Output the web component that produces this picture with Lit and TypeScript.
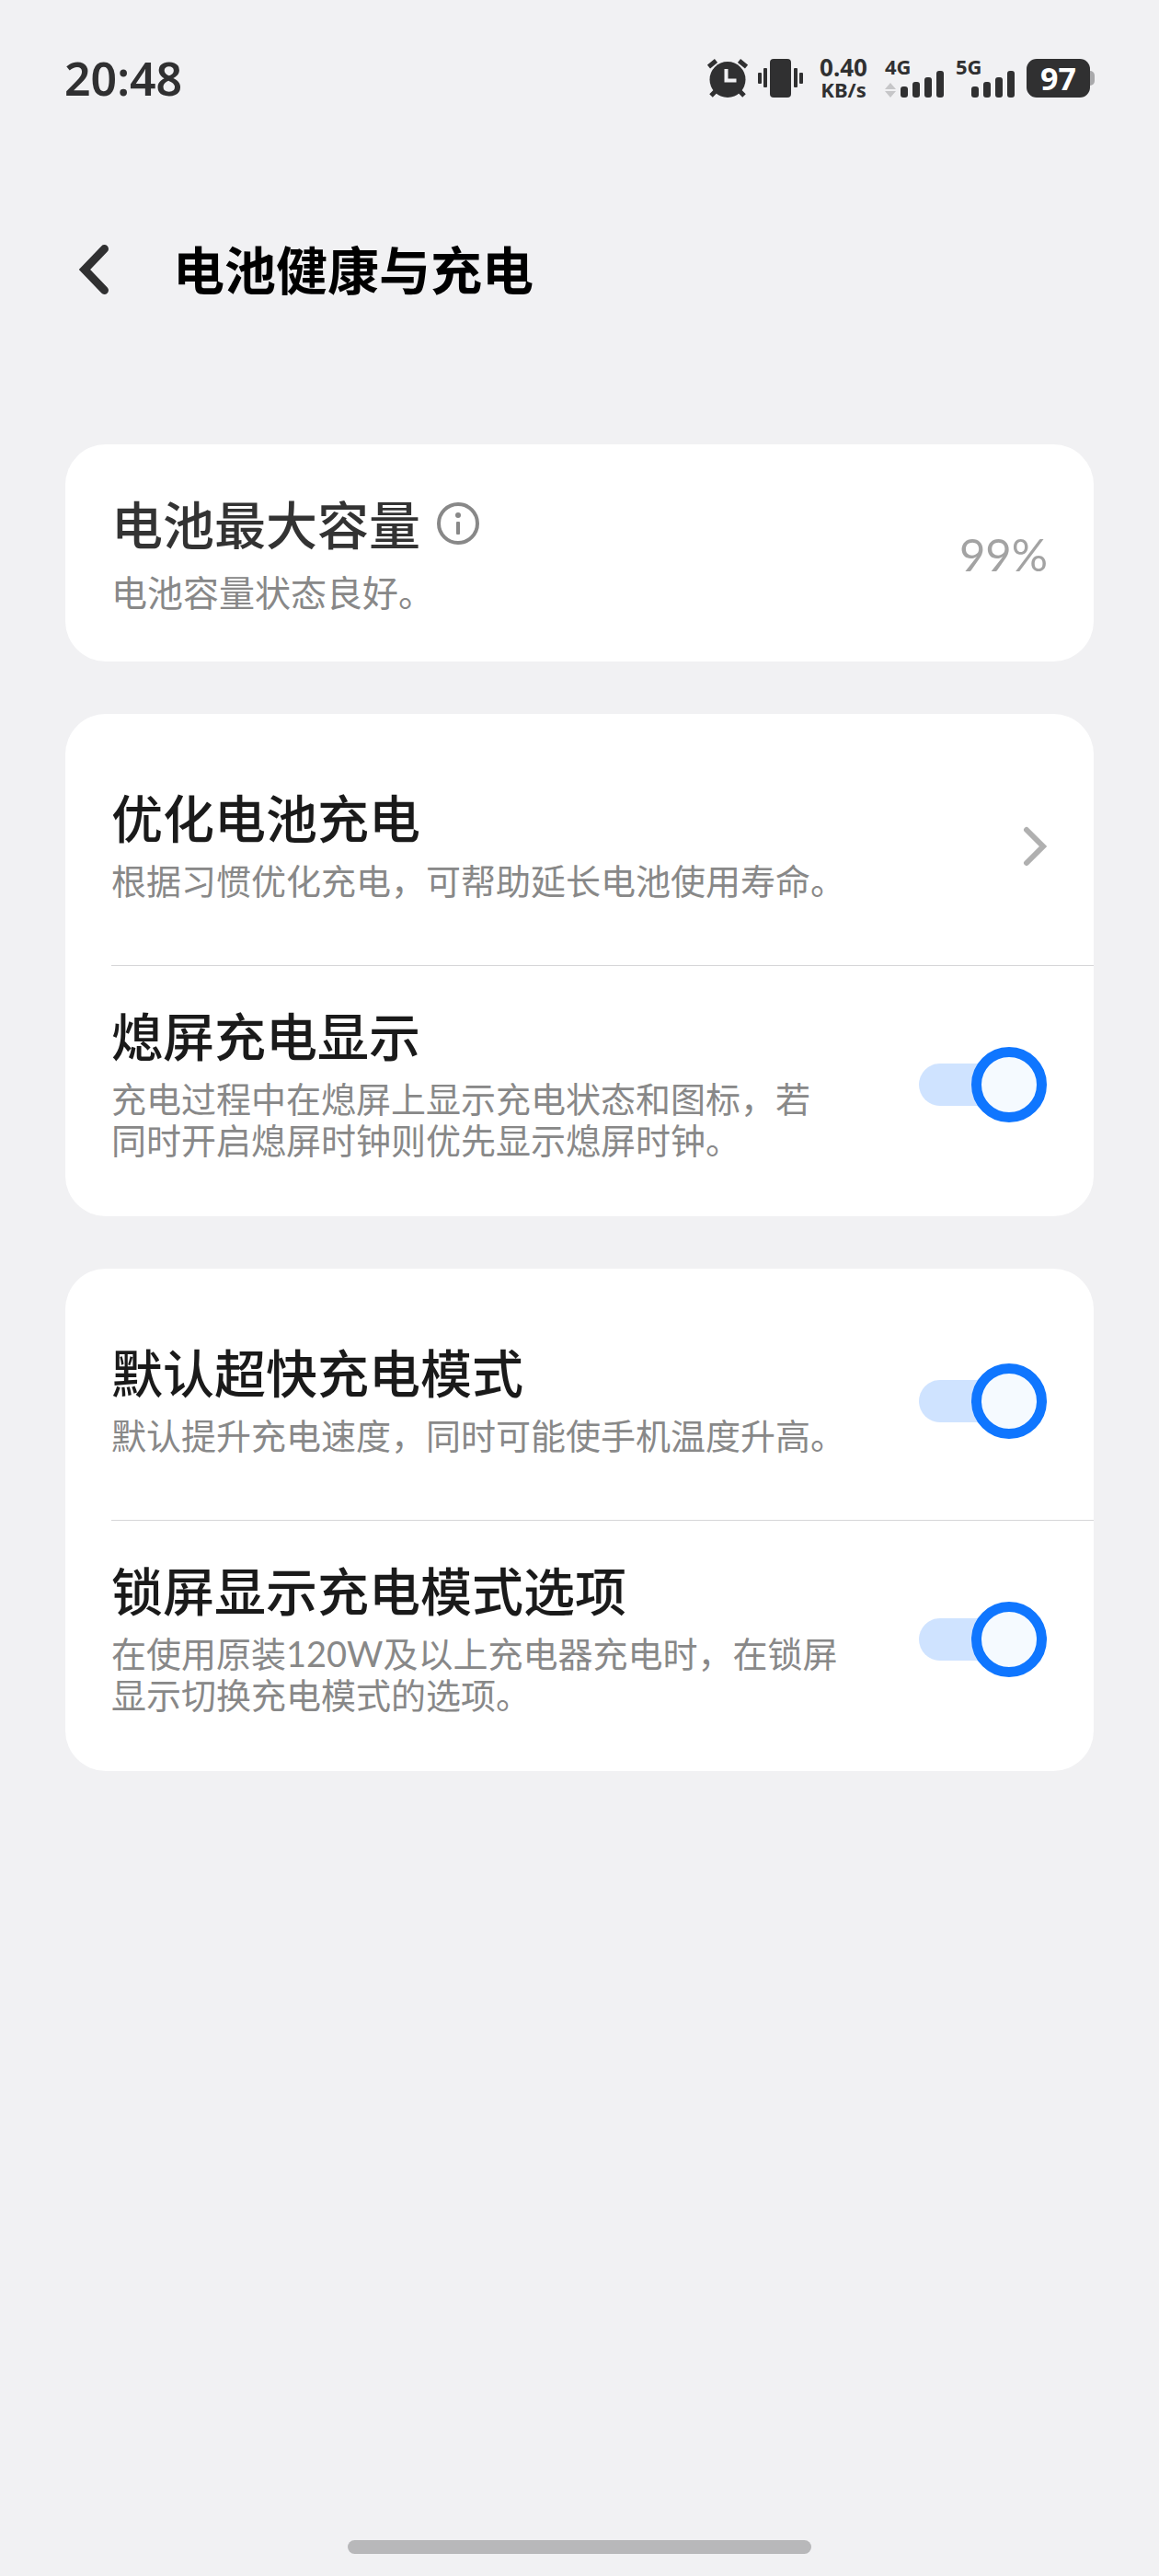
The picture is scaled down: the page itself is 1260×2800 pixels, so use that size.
import { LitElement, html, css, svg, nothing } from "lit";
import { customElement, property, state } from "lit/decorators.js";

interface Setting {
  id: string;
  title: string;
  note: string;
  kind: "link" | "switch";
}

const GROUPS: Setting[][] = [
  [
    {
      id: "optimize",
      title: "优化电池充电",
      note: "根据习惯优化充电，可帮助延长电池使用寿命。",
      kind: "link",
    },
    {
      id: "aod",
      title: "熄屏充电显示",
      note: "充电过程中在熄屏上显示充电状态和图标，若\n同时开启熄屏时钟则优先显示熄屏时钟。",
      kind: "switch",
    },
  ],
  [
    {
      id: "fast",
      title: "默认超快充电模式",
      note: "默认提升充电速度，同时可能使手机温度升高。",
      kind: "switch",
    },
    {
      id: "lock",
      title: "锁屏显示充电模式选项",
      note: "在使用原装120W及以上充电器充电时，在锁屏\n显示切换充电模式的选项。",
      kind: "switch",
    },
  ],
];

@customElement("status-bar")
export class StatusBar extends LitElement {
  static styles = css`
    :host {
      display: flex;
      align-items: center;
      justify-content: space-between;
      height: 42px;
      padding: 64px 70px 0;
      color: #303031;
      font-family: "Noto Sans", "Open Sans", sans-serif;
    }
    .time {
      font-size: 50px;
      line-height: 42px;
      font-weight: 600;
    }
    .icons {
      display: flex;
      align-items: flex-start;
      height: 42px;
      font-weight: 700;
    }
    svg {
      display: block;
    }
    .vibrate {
      margin-left: 11px;
    }
    .rate {
      display: flex;
      flex-direction: column;
      align-items: center;
      width: 54px;
      margin-left: 17px;
    }
    .rate-value {
      font-size: 26px;
      line-height: 18px;
    }
    .rate-unit {
      font-size: 22px;
      line-height: 30px;
    }
    .signal {
      display: flex;
      flex-direction: column;
      width: 64px;
      height: 42px;
      margin-left: 18px;
    }
    .signal + .signal {
      margin-left: 13px;
    }
    .net {
      font-size: 22px;
      line-height: 16px;
      height: 12px;
    }
    .battery {
      display: flex;
      align-items: center;
      margin-left: 13px;
    }
    .level {
      width: 69px;
      border-radius: 11px;
      background: #303031;
      color: #fff;
      font-size: 34px;
      line-height: 42px;
      text-align: center;
    }
    .tip {
      width: 5px;
      height: 16px;
      border-radius: 0 5px 5px 0;
      background: #a9a9ab;
    }
  `;

  private signal(label: string, arrows: boolean) {
    return html`<div class="signal">
      <span class="net">${label}</span>
      <svg width="64" height="30" viewBox="0 0 64 30" fill="#303031" aria-hidden="true">
        ${arrows
          ? svg`<path d="M0 21 6 14l6 7zM0 23h12l-6 7z" fill="#c6c6c8" />`
          : nothing}
        <rect x="17" y="18" width="8" height="12" rx="3" />
        <rect x="30" y="13" width="8" height="17" rx="3" />
        <rect x="43" y="8" width="8" height="22" rx="3" />
        <rect x="56" y="1" width="8" height="29" rx="3" />
      </svg>
    </div>`;
  }

  render() {
    return html`
      <span class="time">20:48</span>
      <div class="icons">
        <svg width="44" height="42" viewBox="0 0 44 42" role="img" aria-label="闹钟">
          <circle cx="22" cy="22.500" r="19.500" fill="#303031" />
          <path
            d="M1.500 8.500 9.500 2M42.500 8.500 34.500 2M9 35 4 40M35 35l5 5"
            stroke="#303031"
            stroke-width="5"
            fill="none"
          />
          <path d="M20.500 11v12.500H31.500" stroke="#f1f1f3" stroke-width="4" fill="none" />
        </svg>
        <svg class="vibrate" width="49" height="42" viewBox="0 0 49 42" fill="#303031" role="img" aria-label="振动">
          <rect x="13" y="0" width="23" height="42" rx="4" />
          <rect x="6" y="10" width="4" height="21" rx="1" />
          <rect x="0" y="15" width="4" height="12" rx="1" />
          <rect x="39" y="10" width="4" height="21" rx="1" />
          <rect x="45" y="15" width="4" height="12" rx="1" />
        </svg>
        <div class="rate">
          <span class="rate-value">0.40</span>
          <span class="rate-unit">KB/s</span>
        </div>
        ${this.signal("4G", true)}${this.signal("5G", false)}
        <div class="battery"><span class="level">97</span><span class="tip"></span></div>
      </div>
    `;
  }
}

@customElement("setting-row")
export class SettingRow extends LitElement {
  @property({ attribute: false }) setting!: Setting;
  @state() private on = true;

  static styles = css`
    :host {
      display: block;
    }
    .row {
      display: flex;
      align-items: center;
      justify-content: space-between;
      gap: 24px;
      min-height: 258px;
      padding: 0 51px 0 50px;
      color: inherit;
      text-decoration: none;
    }
    .text {
      display: flex;
      flex-direction: column;
      gap: 12px;
      padding-bottom: 9px;
    }
    .title {
      font-size: 56px;
      line-height: 72px;
      font-weight: 500;
      color: #1a1a1a;
    }
    .note {
      font-family: Lato, "Noto Sans CJK SC", sans-serif;
      font-size: 38px;
      line-height: 45px;
      color: #888;
      white-space: pre-line;
    }
    .arrow {
      flex: none;
      display: block;
    }
    .switch {
      appearance: none;
      flex: none;
      display: grid;
      align-items: center;
      width: 139px;
      height: 82px;
      margin: 0;
      cursor: pointer;
    }
    .switch::before,
    .switch::after {
      content: "";
      grid-area: 1 / 1;
      box-sizing: border-box;
    }
    .switch::before {
      height: 46px;
      margin-right: 12px;
      border-radius: 23px;
      background: #e4e4e6;
    }
    .switch::after {
      width: 82px;
      height: 82px;
      border: 11px solid #b4b4b8;
      border-radius: 50%;
      background: #f5faff;
    }
    .switch:checked::before {
      background: #cfe3ff;
    }
    .switch:checked::after {
      justify-self: end;
      border-color: #0f76ff;
    }
  `;

  private toggle(e: Event) {
    this.on = (e.target as HTMLInputElement).checked;
  }

  render() {
    const { id, title, note, kind } = this.setting;
    const text = html`<span class="text">
      <span class="title">${title}</span>
      <span class="note">${note}</span>
    </span>`;
    if (kind === "link") {
      return html`<a class="row" href="#${id}">
        ${text}
        <svg class="arrow" width="26" height="44" viewBox="0 0 26 44" fill="none" stroke="#b0b0b0" stroke-width="6" stroke-linecap="round" aria-hidden="true">
          <path d="M4 4 22 22 4 40" />
        </svg>
      </a>`;
    }
    return html`<label class="row" for=${id}>
      ${text}
      <input class="switch" type="checkbox" role="switch" id=${id} .checked=${this.on} @change=${this.toggle} />
    </label>`;
  }
}

@customElement("app-root")
export class AppRoot extends LitElement {
  static styles = css`
    :host {
      display: flex;
      flex-direction: column;
      box-sizing: border-box;
      min-height: 100vh;
      background: #f1f1f3;
      font-family: "Noto Sans CJK SC", sans-serif;
    }
    .header {
      display: flex;
      align-items: center;
      gap: 66px;
      height: 80px;
      padding: 145px 71px 152px 82px;
    }
    .back,
    .info {
      display: block;
      padding: 0;
      border: 0;
      background: none;
      cursor: pointer;
    }
    .back svg,
    .info svg {
      display: block;
    }
    .back {
      padding-top: 4px;
    }
    .info {
      padding-top: 2px;
    }
    .heading {
      margin: 0;
      font-size: 56px;
      line-height: 80px;
      font-weight: 700;
      color: #000;
    }
    .cards {
      display: flex;
      flex-direction: column;
      gap: 57px;
      padding: 0 71px;
    }
    .card {
      border-radius: 44px;
      background: #fff;
    }
    .capacity {
      display: flex;
      align-items: center;
      justify-content: space-between;
      padding: 49px 50px 52px;
    }
    .summary {
      display: flex;
      flex-direction: column;
      gap: 18px;
    }
    .name {
      display: flex;
      align-items: center;
      gap: 18px;
    }
    .title {
      margin: 0;
      font-size: 56px;
      line-height: 72px;
      font-weight: 500;
      color: #333;
    }
    .note {
      margin: 0;
      font-family: Lato, "Noto Sans CJK SC", sans-serif;
      font-size: 39px;
      line-height: 45px;
      color: #888;
    }
    .value {
      padding-top: 4px;
      font-family: Lato, sans-serif;
      font-size: 49px;
      line-height: 60px;
      color: #a3a3a3;
    }
    .group {
      padding: 15px 0 14px;
    }
    .divider {
      height: 1px;
      margin: 0 0 0 50px;
      border: 0;
      background: #d6d6d8;
    }
    .home {
      width: 40%;
      height: 15px;
      margin: auto auto 24px;
      border-radius: 8px;
      background: #b8b8ba;
    }
  `;

  render() {
    return html`
      <status-bar></status-bar>
      <header class="header">
        <button class="back" aria-label="返回">
          <svg width="40" height="56" viewBox="0 0 40 56" fill="none" stroke="#303031" stroke-width="9" stroke-linecap="round">
            <path d="M31.500 5.500 10 28 31.500 50.500" />
          </svg>
        </button>
        <h1 class="heading" lang="zh-CN">电池健康与充电</h1>
      </header>
      <main class="cards" lang="zh-CN">
        <section class="card capacity">
          <div class="summary">
            <div class="name">
              <h2 class="title">电池最大容量</h2>
              <button class="info" aria-label="说明">
                <svg width="46" height="46" viewBox="0 0 46 46" fill="#888">
                  <circle cx="23" cy="23" r="21" fill="none" stroke="#888" stroke-width="4" />
                  <circle cx="23" cy="14" r="3" />
                  <rect x="21" y="21" width="4" height="14" rx="1" />
                </svg>
              </button>
            </div>
            <p class="note">电池容量状态良好。</p>
          </div>
          <span class="value">99%</span>
        </section>
        ${GROUPS.map(
          (group) => html`<section class="card group">
            ${group.map(
              (item, i) => html`${i ? html`<hr class="divider" />` : nothing}
                <setting-row .setting=${item}></setting-row>`
            )}
          </section>`
        )}
      </main>
      <div class="home"></div>
    `;
  }
}
